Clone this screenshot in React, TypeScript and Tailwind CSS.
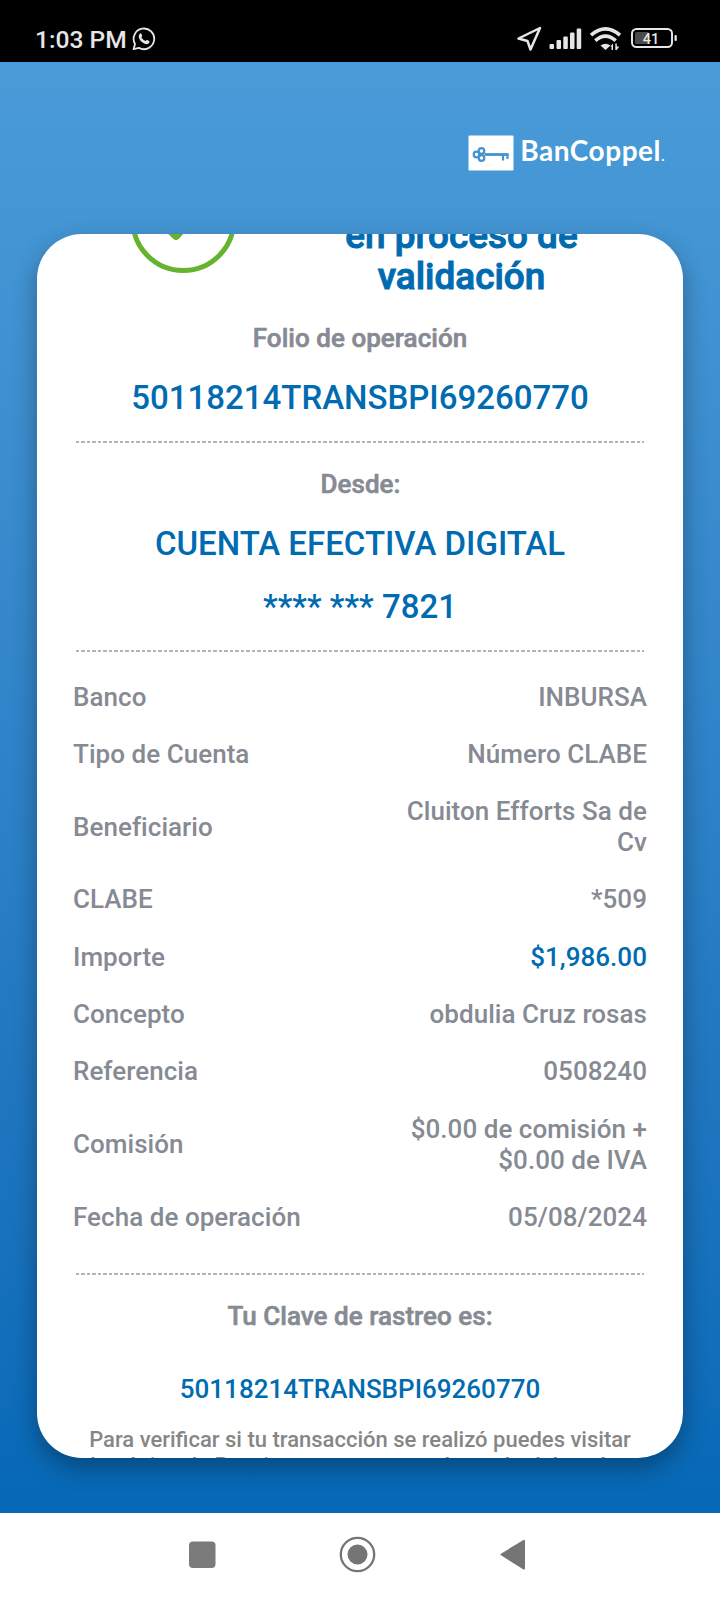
import type { ReactNode } from 'react';

interface DetailRowProps {
  label: string;
  value: ReactNode;
  highlight?: boolean;
}

const details: DetailRowProps[] = [
  { label: 'Banco', value: 'INBURSA' },
  { label: 'Tipo de Cuenta', value: 'Número CLABE' },
  { label: 'Beneficiario', value: <>Cluiton Efforts Sa de<br />Cv</> },
  { label: 'CLABE', value: '*509' },
  { label: 'Importe', value: '$1,986.00', highlight: true },
  { label: 'Concepto', value: 'obdulia Cruz rosas' },
  { label: 'Referencia', value: '0508240' },
  { label: 'Comisión', value: <>$0.00 de comisión +<br />$0.00 de IVA</> },
  { label: 'Fecha de operación', value: '05/08/2024' },
];

const StatusBar = () => (
  <header className="flex h-[62px] items-start justify-between bg-black pl-[35px] pr-[43px] pt-[24px] text-[#e6e6e6]">
    <div className="flex items-center gap-[5px]">
      <span className="text-[24.6px] font-medium leading-[31px]">1:03 PM</span>
      <svg width="24" height="24" viewBox="0 0 24 24" fill="none" className="-mt-[2px]">
        <path d="M1.600 22.200l1.400-5.200A10.300 10.300 0 1 1 7 20.900z" stroke="currentColor" strokeWidth="1.800" strokeLinejoin="round" />
        <path d="M8 6.6c.5-.4 1.1-.3 1.4.3l.7 1.7c.2.5 0 .9-.7 1.7.9 1.8 2.200 3 4.1 3.8.8-.9 1.100-1.300 1.700-1l1.800.9c.6.300.6.700.3 1.500-.5 1.200-2 1.900-3.300 1.600C10.400 16.300 7.300 13.200 6.800 10c-.2-1.300.4-2.700 1.200-3.400z" fill="currentColor" />
      </svg>
    </div>
    <div className="flex items-center pt-[2px]">
      <svg width="160" height="26" viewBox="517 26 160 26" fill="none">
        <path d="M518.500 38.500L540 28l-9.500 21.500-3-8.500z" stroke="currentColor" strokeWidth="2.500" strokeLinejoin="round" />
        <g fill="currentColor">
          <rect x="549.500" y="44" width="4.500" height="5" rx="1" />
          <rect x="556.500" y="40" width="4.500" height="9" rx="1" />
          <rect x="563.300" y="36.500" width="4.500" height="12.500" rx="1" />
          <rect x="570" y="32.500" width="4.500" height="16.500" rx="1" />
          <rect x="576.700" y="28.500" width="4.500" height="20.500" rx="1" />
          <path d="M600.500 45.500Q605.500 42 610.500 45.500L605.500 50z" />
          <path d="M610.300 46.500l2.700-3v6.500h-1.500v-3.500zM615.300 43.500h1.500v3h2.500l-2.500 3.500h-1.500z" />
        </g>
        <g stroke="currentColor" strokeWidth="3.600">
          <path d="M591 35.200Q605.500 22.500 620 35.200" />
          <path d="M595.300 40.700Q605.500 31.500 615.700 40.700" />
        </g>
        <rect x="632" y="29" width="40" height="18" rx="4.500" stroke="currentColor" strokeWidth="2" />
        <rect x="635" y="32" width="14" height="12" rx="1.500" fill="#4a4a4a" />
        <rect x="674.500" y="35" width="2.300" height="6" rx="1" fill="currentColor" />
        <text x="651" y="43.800" textAnchor="middle" fill="currentColor" fontFamily="Roboto, sans-serif" fontSize="14.500" fontWeight="500">41</text>
      </svg>
    </div>
  </header>
);

const Logo = () => (
  <div className="flex items-center gap-[6px] text-white">
    <svg width="46" height="36" viewBox="0 0 46 36" fill="none">
      <rect x="0.500" y="0.500" width="45" height="35" rx="1" fill="#fff" />
      <g stroke="#4294d1" strokeWidth="2.200">
        <circle cx="8.500" cy="19.500" r="2.800" />
        <circle cx="13.500" cy="16" r="2.800" />
        <circle cx="13.500" cy="23" r="2.800" />
        <path d="M16.500 19.500h24" strokeWidth="2.800" />
        <path d="M39.500 19v5M35 19v6.500" />
      </g>
    </svg>
    <span className="font-[Lato,sans-serif] text-[28px] font-bold leading-[36px] tracking-[0.550px]">BanCoppel<span className="text-[14px]">.</span></span>
  </div>
);

const Divider = () => (
  <div className="mx-[39px] h-[2px] bg-[repeating-linear-gradient(90deg,#b3b3b3_0_3.400px,transparent_3.400px_5.500px)]" />
);

const DetailRow = ({ label, value, highlight }: DetailRowProps) => (
  <div className="flex items-center justify-between py-[13.150px] leading-[31px]">
    <span>{label}</span>
    <span className={highlight ? 'text-right text-[#006bb0]' : 'text-right'}>{value}</span>
  </div>
);

const NavBar = () => (
  <nav className="flex h-[87px] items-center justify-center bg-white pb-[6px] pr-[4px]">
    <svg width="340" height="40" viewBox="188 1534 340 40">
      <rect x="189" y="1541.500" width="26.500" height="26.500" rx="4" fill="#7b7b7b" />
      <circle cx="357.500" cy="1554.500" r="16.700" fill="none" stroke="#757575" strokeWidth="2.300" />
      <circle cx="357.500" cy="1554.500" r="10" fill="#757575" />
      <path d="M501.500 1554.500L524 1540.800v27.800z" fill="#757575" stroke="#757575" strokeWidth="2" strokeLinejoin="round" />
    </svg>
  </nav>
);

export default function App() {
  return (
    <div className="flex h-[1600px] w-[720px] flex-col overflow-hidden font-[Roboto,sans-serif]">
      <StatusBar />
      <main className="flex h-[1451px] flex-col bg-linear-to-b from-[#4a9bd8] to-[#0568b6] px-[37px]">
        <div className="flex h-[172px] items-start justify-end pr-[18px] pt-[70px]">
          <Logo />
        </div>
        <section className="h-[1224px] overflow-hidden rounded-[45px] bg-white text-[26px] font-medium tracking-[0.040px] text-[#868a93] shadow-[0_10px_24px_rgba(0,0,0,0.32)]">
          <div className="-mt-[66px] flex h-[132px] pl-[92px]">
            <svg width="108" height="106" viewBox="0 0 108 106" fill="none" stroke="#65b32e" strokeWidth="5">
              <circle cx="54.300" cy="52" r="50.500" />
              <path d="M25 46l22 22 34-38" strokeWidth="8" strokeLinecap="round" strokeLinejoin="round" />
            </svg>
            <h1 className="ml-[89.500px] w-[270px] pt-[47px] text-center text-[36.900px] leading-[41px] tracking-normal text-[#006bb0] [-webkit-text-stroke:1px]">
              en proceso de validación
            </h1>
          </div>
          <h2 className="mt-[22px] text-center leading-[32px] [-webkit-text-stroke:0.600px]">Folio de operación</h2>
          <p className="mt-[22px] text-center text-[33px] leading-[44px] tracking-normal text-[#006bb0]">50118214TRANSBPI69260770</p>
          <div className="pt-[21px]">
            <Divider />
          </div>
          <h2 className="mt-[25px] pl-[1px] text-center leading-[32px] [-webkit-text-stroke:0.600px]">Desde:</h2>
          <p className="mt-[22px] text-center text-[33px] leading-[44px] tracking-normal text-[#006bb0]">CUENTA EFECTIVA DIGITAL</p>
          <p className="mt-[19px] text-center text-[33px] leading-[44px] tracking-normal text-[#006bb0]">**** *** 7821</p>
          <div className="pt-[21px]">
            <Divider />
          </div>
          <div className="px-[36px] pt-[16.500px] text-[26px]">
            {details.map(row => (
              <DetailRow key={row.label} {...row} />
            ))}
          </div>
          <div className="pt-[26.600px]">
            <Divider />
          </div>
          <h2 className="mt-[25px] text-center leading-[32px] [-webkit-text-stroke:0.600px]">Tu Clave de rastreo es:</h2>
          <p className="mt-[41px] text-center text-[26px] leading-[32px] tracking-normal text-[#006bb0]">50118214TRANSBPI69260770</p>
          <p className="mt-[22px] text-center text-[22px] leading-[26px] tracking-normal text-[#868686]">
            Para verificar si tu transacción se realizó puedes visitar
            <span className="block whitespace-nowrap pl-[53px] text-left">
              la página de Banxico para conocer el estado del envío
            </span>
          </p>
        </section>
      </main>
      <NavBar />
    </div>
  );
}
